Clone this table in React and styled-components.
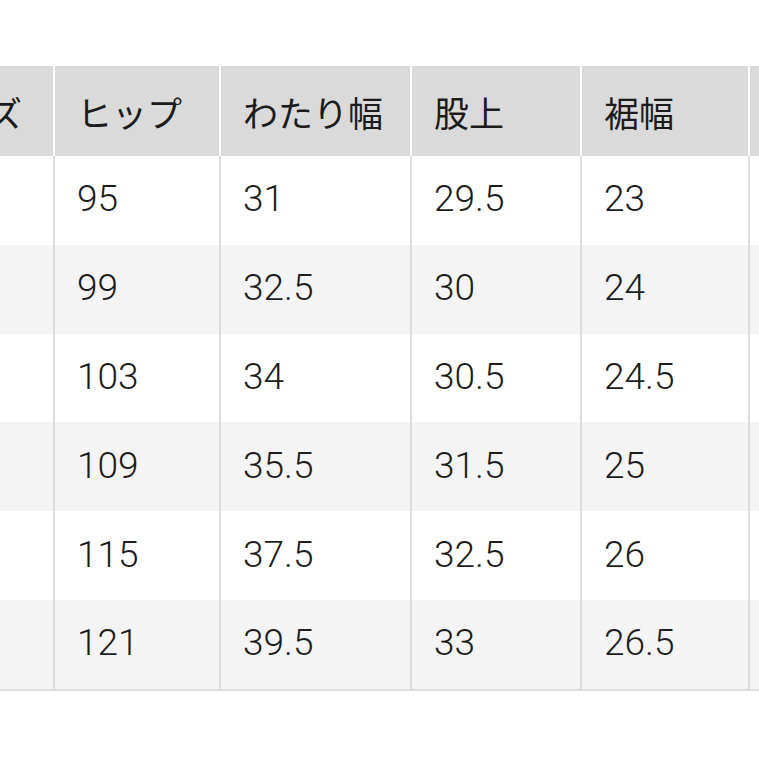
import React, { useLayoutEffect, useRef } from 'react'
import styled, { createGlobalStyle } from 'styled-components';

const columns = ['サイズ', 'ヒップ', 'わたり幅', '股上', '裾幅', '股下'];

const rows = [
  ['XS', '95', '31', '29.5', '23', '76'],
  ['S', '99', '32.5', '30', '24', '76'],
  ['M', '103', '34', '30.5', '24.5', '76'],
  ['L', '109', '35.5', '31.5', '25', '76'],
  ['XL', '115', '37.5', '32.5', '26', '76'],
  ['XXL', '121', '39.5', '33', '26.5', '76'],
];

// column widths of the chart; the first one is partly scrolled out of view
const COLS = '157px 164px 189px 168px 166px 170px';
const SCROLLED = 104;

const GlobalStyle = createGlobalStyle`
  html, body {
    margin: 0;
    padding: 0;
    background: #fff;
    overflow: hidden;
  }
  body {
    font-family: "Liberation Sans", "Noto Sans CJK JP", sans-serif;
    color: #1c1c1c;
  }
`

const SizeChart = () => {
  const scroller = useRef(null);

  useLayoutEffect(() => {
    if (scroller.current) scroller.current.scrollLeft = SCROLLED;
  }, []);

  return (
    <Page>
      <Scroller ref={scroller}>
        <Chart>
          <HeaderRow>
            {columns.map((label) => (
              <HeadCell key={label}>{label}</HeadCell>
            ))}
          </HeaderRow>
          {rows.map((row, index) => (
            <BodyRow key={row[0]}>
              {row.map((value, i) => (
                <Cell key={i} $striped={index % 2 === 1}>{value}</Cell>
              ))}
            </BodyRow>
          ))}
        </Chart>
      </Scroller>
    </Page>
  )
}

const Page = styled.div`
  padding-top: 66px;
  width: 759px;
  height: 759px;
  box-sizing: border-box;
`

const Scroller = styled.div`
  width: 100%;
  overflow-x: auto;
  overflow-y: hidden;
  scrollbar-width: none;
  &::-webkit-scrollbar {
    display: none;
  }
`

const Chart = styled.div`
  width: max-content;
  border-bottom: 2px solid #dcdcdc;
`

const HeaderRow = styled.div`
  display: grid;
  grid-template-columns: ${COLS};
  column-gap: 2px;
  background: #fff;
`

const HeadCell = styled.div`
  display: flex;
  align-items: center;
  height: 90px;
  padding: 0 22px;
  background: #dadada;
  font-size: 35px;
  font-weight: 400;
  white-space: nowrap;
`

const BodyRow = styled.div`
  display: grid;
  grid-template-columns: ${COLS};
  column-gap: 2px;
  background: #dcdcdc;
`

const Cell = styled.div`
  display: flex;
  align-items: center;
  height: 88.8px;
  padding: 0 22px 3px;
  box-sizing: border-box;
  background: ${(p) => (p.$striped ? '#f4f4f4' : '#fff')};
  font-family: Roboto, "Liberation Sans", sans-serif;
  font-weight: 300;
  font-size: 37px;
  white-space: nowrap;
`

const App = () => (
  <>
    <GlobalStyle />
    <SizeChart />
  </>
)

export default App;
